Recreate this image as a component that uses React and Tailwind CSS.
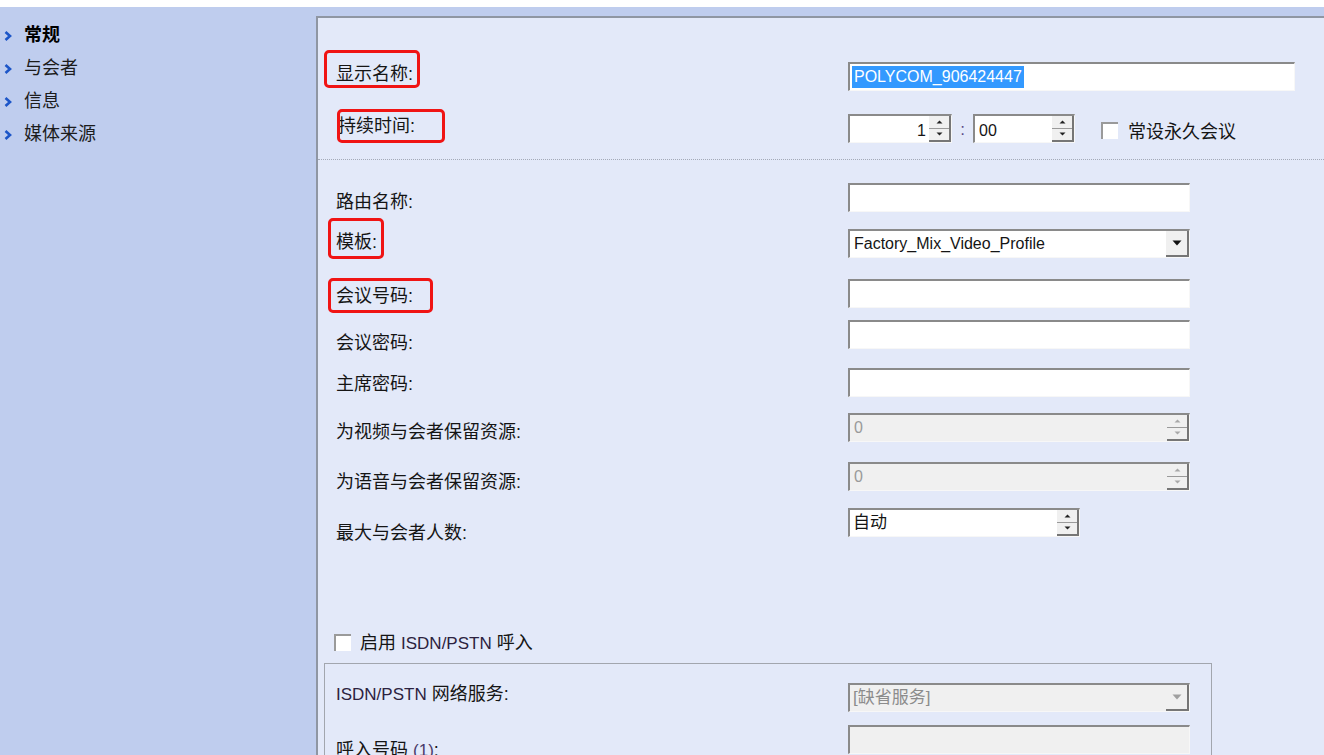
import React from "react";

function Chevron() {
  return (
    <svg width="10" height="12" viewBox="0 0 10 12" className="shrink-0">
      <path d="M2.5 2 L7 6 L2.5 10" fill="none" stroke="#1d56c8" strokeWidth="2.6" />
    </svg>
  );
}

function Tri({ up, color }) {
  return (
    <svg width="7" height="4" viewBox="0 0 7 4">
      <path d={up ? "M0.5 3.5 L3.5 0.5 L6.5 3.5 Z" : "M0.5 0.5 L6.5 0.5 L3.5 3.5 Z"} fill={color} />
    </svg>
  );
}

function SpinBtns({ disabled }) {
  const c = disabled ? "#a8a8a8" : "#222";
  return (
    <div className="flex w-[22px] shrink-0 flex-col border-r-2 border-b-2 border-[#767676] bg-[#f0f0f0]">
      <div className="flex flex-1 items-center justify-center border-b border-[#9a9a9a]">
        <Tri up color={c} />
      </div>
      <div className="flex flex-1 items-center justify-center">
        <Tri color={c} />
      </div>
    </div>
  );
}

function DropBtn({ disabled }) {
  return (
    <div className="flex w-[23px] shrink-0 items-center justify-center border-r-2 border-b-2 border-[#767676] bg-[#f0f0f0]">
      <svg width="10" height="6" viewBox="0 0 10 6">
        <path d="M0.5 0.5 L9.5 0.5 L5 5.5 Z" fill={disabled ? "#a0a0a0" : "#111"} />
      </svg>
    </div>
  );
}

function Box({ className, children }) {
  return (
    <div
      className={`flex h-[29px] shrink-0 border-t-2 border-l-2 border-t-[#8a8a8a] border-l-[#8a8a8a] border-b border-r border-b-[#f7f7f7] border-r-[#f7f7f7] ${className}`}
    >
      {children}
    </div>
  );
}

function Mark({ className }) {
  return <span className={`pointer-events-none absolute rounded-[5px] border-[3px] border-[#f01414] ${className}`} />;
}

export default function App() {
  return (
    <div className="flex h-[755px] w-[1324px] flex-col overflow-hidden bg-white font-['Liberation_Sans','Noto_Sans_CJK_SC',sans-serif] text-[18px] leading-[24px] text-[#151515]">
      <div className="h-[7px] shrink-0 bg-white" />
      <div className="flex min-h-0 flex-1 bg-[#bfcdee]">
        {/* left nav */}
        <aside className="w-[316px] shrink-0 pt-[16px]">
          {["常规", "与会者", "信息", "媒体来源"].map((t, i) => (
            <div key={t} className="flex h-[33px] items-start gap-[11px] pl-[3px]">
              <div className="mt-[7px]">
                <Chevron />
              </div>
              <span className={i === 0 ? "font-bold text-black" : "text-[#1c1c1c]"}>{t}</span>
            </div>
          ))}
        </aside>

        {/* form panel */}
        <main className="mt-[9px] flex-1 border-t-2 border-l-2 border-[#8f96a3] bg-[#e3e9f9]">
          <div className="pl-[18px] pt-[44px]">
            <div className="flex h-[52px] items-start">
              <div className="w-[512px] shrink-0">
                <span className="relative -mt-[2px] inline-block">
                  显示名称:
                  <Mark className="-left-[12px] -top-[12px] h-[38px] w-[96px]" />
                </span>
              </div>
              <Box className="w-[447px] bg-white">
                <span className="ml-[2px] mt-[2px] h-[22px] bg-[#3399ff] px-[2px] text-[16px] leading-[22px] text-white">
                  POLYCOM_906424447
                </span>
              </Box>
            </div>

            <div className="flex h-[45px] items-start">
              <div className="w-[512px] shrink-0">
                <span className="relative -mt-[4px] ml-[2px] inline-block">
                  持续时间:
                  <Mark className="-left-[1px] -top-[5px] h-[34px] w-[108px]" />
                </span>
              </div>
              <Box className="h-[28px] w-[104px] bg-white">
                <span className="flex-1 pr-[3px] pt-[3px] text-right text-[16px] leading-[24px]">1</span>
                <SpinBtns />
              </Box>
              <span className="w-[21px] pt-[3px] text-center text-[17px] leading-[26px] text-[#5c4a86]">:</span>
              <Box className="h-[28px] w-[102px] bg-white">
                <span className="flex-1 pl-[4px] pt-[3px] text-[16px] leading-[24px]">00</span>
                <SpinBtns />
              </Box>
              <span className="ml-[26px] mt-[8px] h-[17px] w-[17px] border-t-2 border-l-2 border-[#9a9a9a] bg-white" />
              <span className="ml-[10px] mt-[6px]">常设永久会议</span>
            </div>
          </div>

          <div className="border-t border-dotted border-[#a4aab8]" />

          <div className="pl-[18px] pt-[23px]">
            <div className="flex h-[46px] items-start">
              <div className="w-[512px] shrink-0 pt-[7px]">路由名称:</div>
              <Box className="w-[342px] bg-white" />
            </div>

            <div className="flex h-[50px] items-start">
              <div className="w-[512px] shrink-0 pt-[1px]">
                <span className="relative inline-block">
                  模板:
                  <Mark className="-left-[8px] -top-[12px] h-[41px] w-[56px]" />
                </span>
              </div>
              <Box className="w-[342px] bg-white">
                <span className="flex-1 pl-[4px] text-[16px] leading-[25px]">Factory_Mix_Video_Profile</span>
                <DropBtn />
              </Box>
            </div>

            <div className="flex h-[41px] items-start">
              <div className="w-[512px] shrink-0 pt-[5px]">
                <span className="relative inline-block">
                  会议号码:
                  <Mark className="-left-[8px] -top-[6px] h-[35px] w-[105px]" />
                </span>
              </div>
              <Box className="w-[342px] bg-white" />
            </div>

            <div className="flex h-[48px] items-start">
              <div className="w-[512px] shrink-0 pt-[11px]">会议密码:</div>
              <Box className="w-[342px] bg-white" />
            </div>

            <div className="flex h-[45px] items-start">
              <div className="w-[512px] shrink-0 pt-[4px]">主席密码:</div>
              <Box className="w-[342px] bg-white" />
            </div>

            <div className="flex h-[49px] items-start">
              <div className="w-[512px] shrink-0 pt-[7px]">为视频与会者保留资源:</div>
              <Box className="w-[342px] bg-[#f0f0f0]">
                <span className="flex-1 pl-[4px] text-[16px] leading-[25px] text-[#9a9a9a]">0</span>
                <SpinBtns disabled />
              </Box>
            </div>

            <div className="flex h-[46px] items-start">
              <div className="w-[512px] shrink-0 pt-[8px]">为语音与会者保留资源:</div>
              <Box className="w-[342px] bg-[#f0f0f0]">
                <span className="flex-1 pl-[4px] text-[16px] leading-[25px] text-[#9a9a9a]">0</span>
                <SpinBtns disabled />
              </Box>
            </div>

            <div className="flex h-[122px] items-start">
              <div className="w-[512px] shrink-0 pt-[13px]">最大与会者人数:</div>
              <Box className="w-[232px] bg-white">
                <span className="flex-1 pl-[3px] text-[17px] leading-[25px]">自动</span>
                <SpinBtns />
              </Box>
            </div>

            <div className="flex h-[33px] items-start">
              <span className="-ml-[2px] mt-[4px] h-[17px] w-[17px] border-t-2 border-l-2 border-[#9a9a9a] bg-white" />
              <span className="ml-[9px] mt-[1px]">
                启用 <span className="text-[17px] text-[#2c2240]">ISDN/PSTN</span> 呼入
              </span>
            </div>

            <div className="-ml-[12px] w-[888px] border border-[#a2a6ae] pl-[11px] pt-[19px]">
              <div className="flex h-[42px] items-start">
                <div className="w-[512px] shrink-0 -mt-[1px]">
                  <span className="text-[17px] text-[#2c2240]">ISDN/PSTN</span> 网络服务:
                </div>
                <Box className="w-[342px] bg-[#f0f0f0]">
                  <span className="flex-1 pl-[3px] text-[17px] leading-[25px] text-[#8c8c8c]">[缺省服务]</span>
                  <DropBtn disabled />
                </Box>
              </div>
              <div className="flex h-[60px] items-start">
                <div className="w-[512px] shrink-0 pt-[13px]">
                  呼入号码 <span className="text-[17px] text-[#4a3a6a]">(1)</span>:
                </div>
                <Box className="w-[342px] bg-[#f0f0f0]" />
              </div>
            </div>
          </div>
        </main>
      </div>
    </div>
  );
}
